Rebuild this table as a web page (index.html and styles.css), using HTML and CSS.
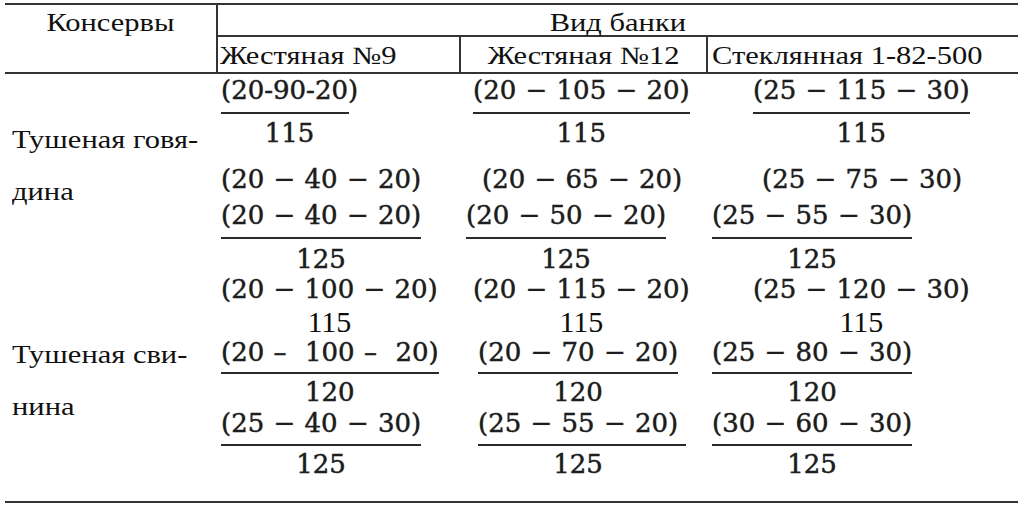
FILE: index.html
```html
<!DOCTYPE html>
<html lang="ru">
<head>
<meta charset="utf-8">
<title>Консервы</title>
<link rel="stylesheet" href="styles.css">
</head>
<body>
<div class="sheet">
  <div class="head">
    <div class="h-name"><span class="st st-c">Консервы</span></div>
    <div class="h-kind"><span class="st st-c">Вид банки</span></div>
    <div class="h-sub h-left"><span class="st">Жестяная №9</span></div>
    <div class="h-sub h-mid"><span class="st st-c">Жестяная №12</span></div>
    <div class="h-sub h-right"><span class="st">Стеклянная 1-82-500</span></div>
  </div>

  <div class="body">
    <div class="labels">
      <div class="label l1"><span class="st">Тушеная говя-</span><br><span class="st">дина</span></div>
      <div class="label l2"><span class="st">Тушеная сви-</span><br><span class="st">нина</span></div>
    </div>

    <div class="col">
      <div class="fr fa in3 short"><div class="num">(20-90-20)</div><div class="bar"></div><div class="den">115</div></div>
      <div class="lone in3">(20 − 40 − 20)</div>
      <div class="fr fb in3"><div class="num">(20 − 40 − 20)</div><div class="bar"></div><div class="den">125</div></div>
      <div class="grp in3"><div class="num">(20 − 100 − 20)</div><div class="plain">115</div></div>
      <div class="fr fc in3"><div class="num">(20 –&nbsp; 100 –&nbsp; 20)</div><div class="bar"></div><div class="den">120</div></div>
      <div class="fr fd in3"><div class="num">(25 − 40 − 30)</div><div class="bar"></div><div class="den">125</div></div>
    </div>

    <div class="col">
      <div class="fr fa in12"><div class="num">(20 − 105 − 20)</div><div class="bar"></div><div class="den">115</div></div>
      <div class="lone in21">(20 − 65 − 20)</div>
      <div class="fr fb in5"><div class="num">(20 − 50 − 20)</div><div class="bar"></div><div class="den">125</div></div>
      <div class="grp in12"><div class="num">(20 − 115 − 20)</div><div class="plain">115</div></div>
      <div class="fr fc in17"><div class="num">(20 − 70 − 20)</div><div class="bar"></div><div class="den">120</div></div>
      <div class="fr fd in17 long"><div class="num">(25 − 55 − 20)</div><div class="bar"></div><div class="den">125</div></div>
    </div>

    <div class="col">
      <div class="fr fa in45"><div class="num">(25 − 115 − 30)</div><div class="bar"></div><div class="den">115</div></div>
      <div class="lone in54">(25 − 75 − 30)</div>
      <div class="fr fb in4"><div class="num">(25 − 55 − 30)</div><div class="bar"></div><div class="den">125</div></div>
      <div class="grp in45"><div class="num">(25 − 120 − 30)</div><div class="plain">115</div></div>
      <div class="fr fc in4"><div class="num">(25 − 80 − 30)</div><div class="bar"></div><div class="den">120</div></div>
      <div class="fr fd in4"><div class="num">(30 − 60 − 30)</div><div class="bar"></div><div class="den">125</div></div>
    </div>
  </div>
</div>
</body>
</html>
```

FILE: styles.css
```css
html, body {
  margin: 0;
  padding: 0;
  background: #ffffff;
}

body {
  width: 1030px;
  height: 507px;
  overflow: hidden;
  font-family: "Liberation Serif", "Times New Roman", serif;
  color: #111111;
}

.sheet {
  margin: 3px 0 0 5px;
  width: 1013px;
}

/* ---------- header ---------- */
.head {
  display: grid;
  grid-template-columns: 213px 243px 247px 310px;
  grid-template-rows: 32px 35px;
  border-top: 2px solid #333;
  border-bottom: 2px solid #333;
  font-size: 25px;
  line-height: 30px;
}

.st {
  display: inline-block;
  transform: scaleX(1.22);
  transform-origin: left center;
  white-space: nowrap;
}

.st-c {
  transform-origin: center center;
}

.h-name {
  grid-row: 1 / span 2;
  grid-column: 1;
  border-right: 2px solid #333;
  text-align: center;
  padding-top: 3px;
}

.h-kind {
  grid-row: 1;
  grid-column: 2 / span 3;
  border-bottom: 2px solid #333;
  text-align: center;
  padding-top: 3px;
}

.h-sub {
  grid-row: 2;
  padding-top: 4px;
}

.h-left {
  grid-column: 2;
  border-right: 2px solid #333;
  padding-left: 2px;
}

.h-mid {
  grid-column: 3;
  border-right: 2px solid #333;
  text-align: center;
}

.h-right {
  grid-column: 4;
  padding-left: 4px;
}

/* ---------- body ---------- */
.body {
  display: grid;
  grid-template-columns: 213px 243px 247px 310px;
  border-bottom: 2px solid #333;
}

.labels {
  display: flex;
  flex-direction: column;
  font-size: 25px;
  line-height: 52px;
  padding-left: 7px;
}

.l1 {
  padding-top: 40px;
}

.l2 {
  margin-top: 111px;
}

.col {
  display: flex;
  flex-direction: column;
  align-items: flex-start;
  padding-bottom: 24px;
  font-family: "DejaVu Serif", serif;
  font-size: 26px;
  line-height: 26px;
  color: #1c1c1c;
  word-spacing: 1px;
  -webkit-text-stroke: 0.3px #2a2a2a;
  text-shadow: 0 0 0.8px rgba(0, 0, 0, 0.5);
}

.fr,
.grp {
  display: flex;
  flex-direction: column;
  align-items: center;
}

.num,
.den,
.lone {
  white-space: nowrap;
}

.bar {
  align-self: stretch;
  height: 2px;
  background: #2a2a2a;
}

.short .bar {
  margin-right: 9px;
}

.long .bar {
  margin-right: -8px;
}

.plain {
  font-family: "Liberation Serif", "Times New Roman", serif;
  font-size: 30px;
  line-height: 29px;
  color: #0d0d0d;
  -webkit-text-stroke: 0;
  text-shadow: none;
  margin-top: 5px;
}

.fa { margin-top: 3px; }
.fa .bar { margin-top: 9px; }
.fa .den { margin-top: 6px; }

.lone { margin-top: 20px; }

.fb { margin-top: 10px; }
.fb .bar { margin-top: 9px; }
.fb .den { margin-top: 7px; }

.grp { margin-top: 4px; }

.fc { margin-top: 3px; }
.fc .bar { margin-top: 7px; }
.fc .den { margin-top: 5px; }

.fd { margin-top: 5px; }
.fd .bar { margin-top: 8px; }
.fd .den { margin-top: 5px; }

/* indents from the column's left edge */
.in3 { margin-left: 3px; }
.in4 { margin-left: 4px; }
.in5 { margin-left: 5px; }
.in12 { margin-left: 12px; }
.in17 { margin-left: 17px; }
.in21 { margin-left: 21px; }
.in45 { margin-left: 45px; }
.in54 { margin-left: 54px; }
```
